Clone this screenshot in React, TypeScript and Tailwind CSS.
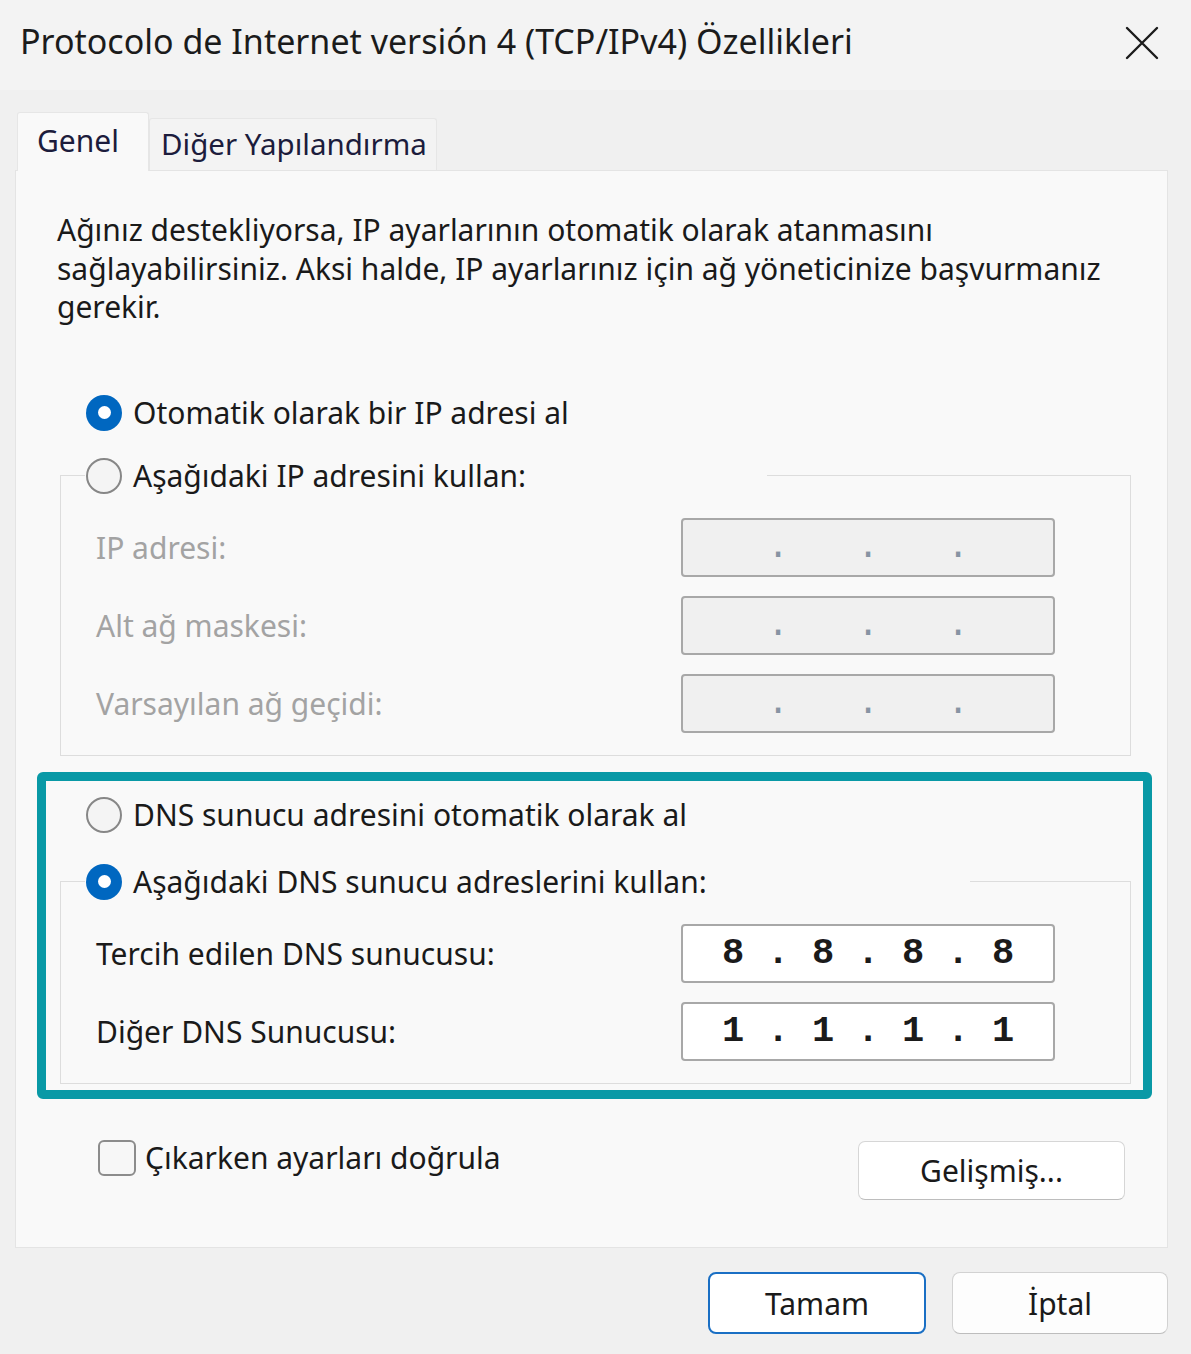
import React from "react";

const body = "font-['Noto_Sans',sans-serif]";

function Radio({ checked }: { checked: boolean }) {
  return checked ? (
    <span className="flex h-[36px] w-[36px] shrink-0 items-center justify-center rounded-full bg-[#0067c0]">
      <span className="h-[13px] w-[13px] rounded-full bg-white" />
    </span>
  ) : (
    <span className="h-[36px] w-[36px] shrink-0 rounded-full border-2 border-[#878787] bg-[#f4f4f4]" />
  );
}

function IpBox({ value, disabled }: { value: string; disabled?: boolean }) {
  return (
    <div
      className={
        disabled
          ? "flex h-[59px] w-[374px] shrink-0 items-center rounded-[4px] border-2 border-[#a8a8a8] bg-[#f0f0f0] pl-[39px]"
          : "flex h-[59px] w-[374px] shrink-0 items-center rounded-[4px] border-2 border-[#a8a8a8] bg-white pl-[39px]"
      }
    >
      <span
        className={
          disabled
            ? "whitespace-pre font-['Liberation_Mono',monospace] text-[37px] leading-none tracking-[0.3px] text-[#8794a3]"
            : "whitespace-pre font-['Liberation_Mono',monospace] text-[37px] font-bold leading-none tracking-[0.3px] text-[#1a1a1a]"
        }
      >
        {value}
      </span>
    </div>
  );
}

function Row({ label, value, disabled }: { label: string; value: string; disabled?: boolean }) {
  return (
    <div className="flex items-center">
      <div className={disabled ? "w-[585px] text-[#a3a3a3]" : "w-[585px] text-[#1a1a1a]"}>{label}</div>
      <IpBox value={value} disabled={disabled} />
    </div>
  );
}

export default function App() {
  return (
    <div className={`relative h-[1354px] w-[1191px] overflow-hidden bg-[#f0f0f0] ${body}`}>
      {/* Title bar */}
      <div className="flex h-[90px] items-center justify-between bg-[#f3f3f3] pl-[20px] pr-[32px]">
        <div className="mb-[8px] whitespace-nowrap text-[34px] text-[#1b1b1b]">
          Protocolo de Internet versión 4 (TCP/IPv4) Özellikleri
        </div>
        <svg width="34" height="34" viewBox="0 0 34 34" className="mb-[4px]">
          <path d="M2 2 L32 32 M32 2 L2 32" stroke="#1b1b1b" strokeWidth="2.4" strokeLinecap="round" />
        </svg>
      </div>

      {/* Tabs */}
      <div className="flex items-end pl-[17px] pt-[22px]">
        <div className="relative z-10 mb-[-1px] flex h-[59px] w-[132px] items-center whitespace-nowrap rounded-t-[3px] border border-b-0 border-[#e6e6e6] bg-[#f9f9f9] pl-[19px] pb-[4px] text-[30px] text-[#1c1c3c]">
          Genel
        </div>
        <div className="flex h-[52px] w-[288px] items-center whitespace-nowrap rounded-t-[3px] border border-b-0 border-[#e6e6e6] bg-[#f3f3f3] pl-[11px] text-[29.5px] text-[#1c1c3c]">
          Diğer Yapılandırma
        </div>
      </div>

      {/* Panel */}
      <div className="ml-[15px] flex h-[1078px] w-[1153px] flex-col border border-[#e4e4e4] bg-[#f9f9f9] text-[30px] text-[#1a1a1a]">
        <p className="ml-[41px] mt-[40px] w-[1080px] leading-[38.5px]">
          Ağınız destekliyorsa, IP ayarlarının otomatik olarak atanmasını
          <br />
          sağlayabilirsiniz. Aksi halde, IP ayarlarınız için ağ yöneticinize başvurmanız
          <br />
          gerekir.
        </p>

        <div className="ml-[70px] mt-[66px] flex h-[40px] items-center gap-[11px]">
          <Radio checked />
          <span>Otomatik olarak bir IP adresi al</span>
        </div>

        <fieldset className="ml-[44px] mt-[23px] w-[1071px] border border-[#dddddd] pb-[22px] pl-[35px]">
          <legend className="ml-[-11px] w-[682px] pl-[1px]">
            <div className="flex h-[40px] items-center gap-[11px]">
              <Radio checked={false} />
              <span>Aşağıdaki IP adresini kullan:</span>
            </div>
          </legend>
          <div className="mt-[22px] flex flex-col gap-[19px]">
            <Row label="IP adresi:" value={"  .   .   .  "} disabled />
            <Row label="Alt ağ maskesi:" value={"  .   .   .  "} disabled />
            <Row label="Varsayılan ağ geçidi:" value={"  .   .   .  "} disabled />
          </div>
        </fieldset>

        <div className="ml-[70px] mt-[39px] flex h-[40px] items-center gap-[11px]">
          <Radio checked={false} />
          <span>DNS sunucu adresini otomatik olarak al</span>
        </div>

        <fieldset className="ml-[44px] mt-[27px] w-[1071px] border border-[#dddddd] pb-[22px] pl-[35px]">
          <legend className="ml-[-11px] w-[885px] pl-[1px]">
            <div className="flex h-[40px] items-center gap-[11px]">
              <Radio checked />
              <span>Aşağıdaki DNS sunucu adreslerini kullan:</span>
            </div>
          </legend>
          <div className="mt-[22px] flex flex-col gap-[19px]">
            <Row label="Tercih edilen DNS sunucusu:" value="8 . 8 . 8 . 8" />
            <Row label="Diğer DNS Sunucusu:" value="1 . 1 . 1 . 1" />
          </div>
        </fieldset>

        <div className="ml-[82px] mr-[42px] mt-[56px] flex items-start justify-between">
          <div className="flex h-[36px] items-center gap-[9px]">
            <span className="h-[36px] w-[38px] rounded-[6px] border-2 border-[#8c8c8c] bg-[#f7f7f7]" />
            <span>Çıkarken ayarları doğrula</span>
          </div>
          <div className="mt-[1px] flex h-[59px] w-[267px] items-center justify-center rounded-[7px] border border-[#d6d6d6] border-b-[#bdbdbd] bg-white">
            Gelişmiş...
          </div>
        </div>
      </div>

      {/* Bottom buttons */}
      <div className="mt-[24px] flex justify-end gap-[26px] pr-[23px] text-[30px] text-[#1a1a1a]">
        <div className="flex h-[62px] w-[218px] items-center justify-center rounded-[8px] border-2 border-[#1a6fc4] bg-white">
          Tamam
        </div>
        <div className="flex h-[62px] w-[216px] items-center justify-center rounded-[8px] border border-[#d2d2d2] border-b-[#bdbdbd] bg-[#fdfdfd]">
          İptal
        </div>
      </div>

      {/* Highlight annotation */}
      <div className="pointer-events-none absolute left-[37px] top-[772px] h-[327px] w-[1115px] rounded-[6px] border-[9px] border-[#0999a6]" />
    </div>
  );
}
